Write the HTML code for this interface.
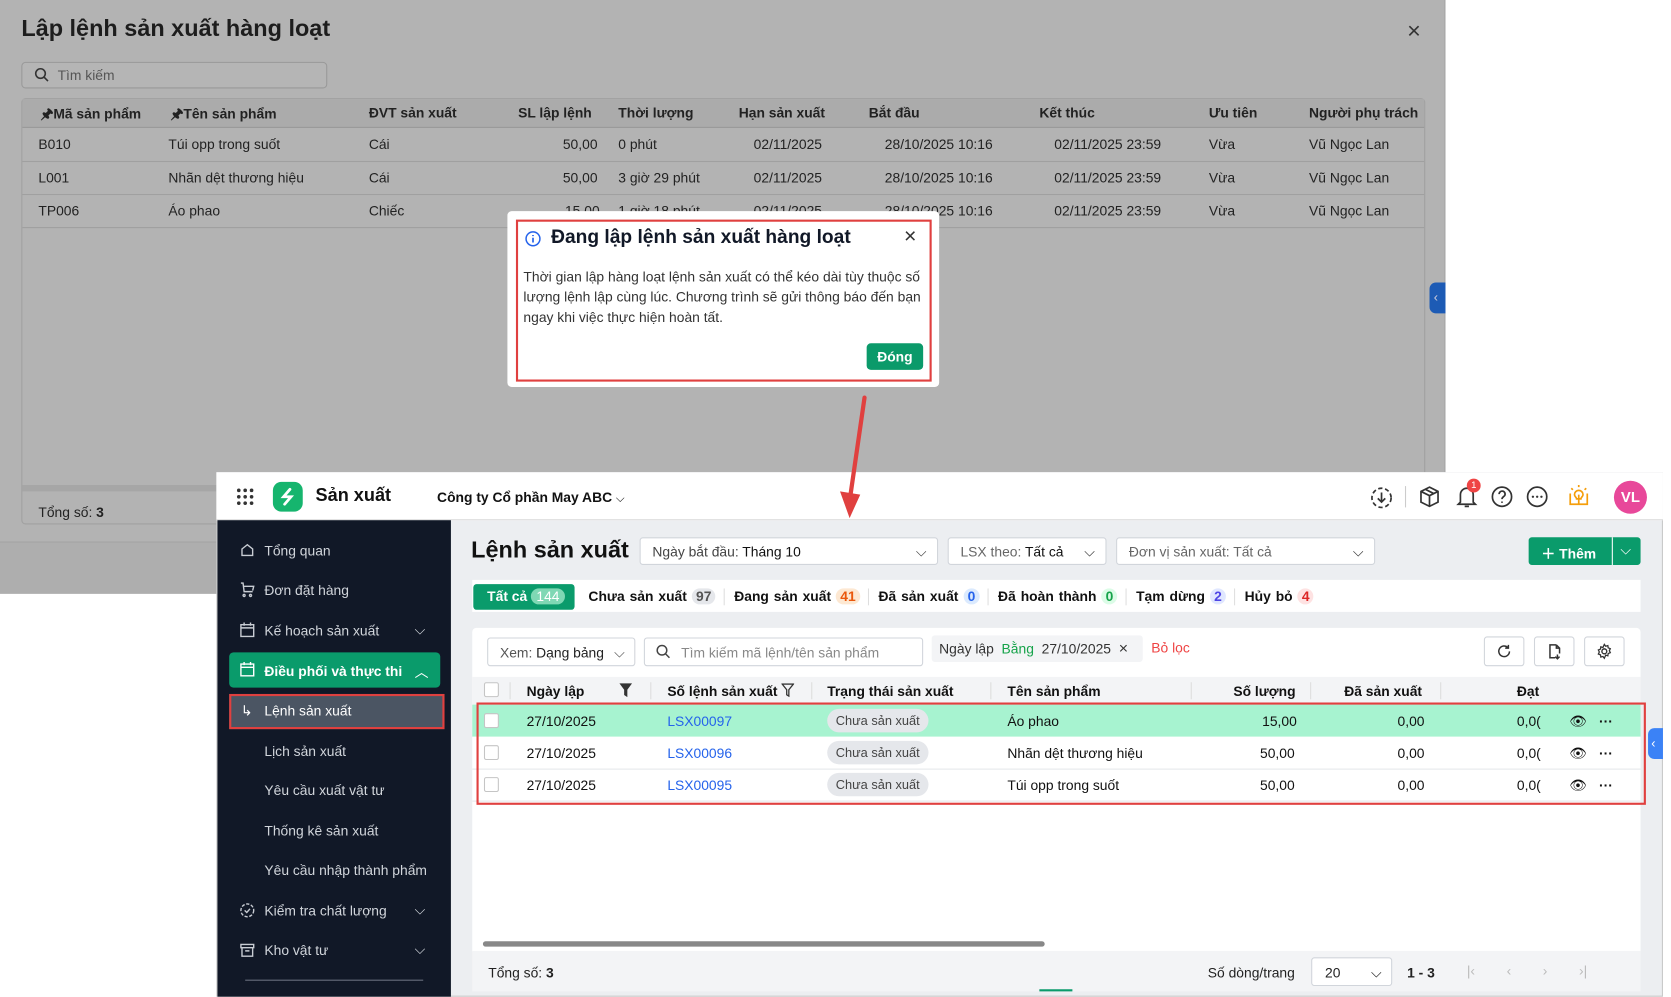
<!DOCTYPE html>
<html><head><meta charset="utf-8">
<style>
*{box-sizing:border-box;margin:0;padding:0}
html,body{width:1671px;height:997px;overflow:hidden;background:#fff;font-family:"Liberation Sans",sans-serif}
#w{position:absolute;left:0;top:0;width:1560px;height:935px;transform:scale(1.066);transform-origin:0 0}
.a{position:absolute;white-space:nowrap}
.t13{font-size:13px}
</style></head><body><div id="w">

<!-- backdrop modal -->
<div class="a" style="left:0;top:0;width:1356px;height:557px;background:#b3b3b3;border-right:1px solid #a5a5a5"></div>
<div class="a" style="left:0;top:508px;width:1356px;height:49px;background:#aeaeae;border-top:1px solid #a3a3a3"></div>
<div class="a" style="left:20px;top:14px;font-size:22px;font-weight:bold;color:#1d1d1d">Lập lệnh sản xuất hàng loạt</div>
<div class="a" style="left:1320px;top:16px;font-size:22px;color:#333">×</div>
<div class="a" style="left:20px;top:58px;width:287px;height:25px;border:1px solid #999;border-radius:4px;background:#b5b5b5"></div>
<svg class="a" style="left:32px;top:63px" width="15" height="15" viewBox="0 0 15 15"><circle cx="6" cy="6" r="4.5" fill="none" stroke="#333" stroke-width="1.5"/><path d="M9.5 9.5L13 13" stroke="#333" stroke-width="1.5"/></svg>
<div class="a t13" style="left:54px;top:63px;color:#555">Tìm kiếm</div>
<div class="a" style="left:20px;top:92px;width:1317px;height:400px;border:1px solid #a0a0a0;border-radius:4px"></div>
<div class="a" style="left:21px;top:93px;width:1315px;height:27px;background:#ababab;border-bottom:1px solid #999"></div>
<div class="a" style="left:21px;top:151px;width:1315px;height:1px;background:#a0a0a0"></div>
<div class="a" style="left:21px;top:182px;width:1315px;height:1px;background:#a0a0a0"></div>
<div class="a" style="left:21px;top:213px;width:1315px;height:1px;background:#a0a0a0"></div>
<div class="a" style="left:21px;top:455px;width:1315px;height:6px;background:#a6a6a6"></div>
<div class="a t13" style="left:0;top:98px;width:1340px;height:16px;font-weight:bold;color:#222">
<span class="a" style="left:38px">🖈Mã sản phẩm</span><span class="a" style="left:160px">🖈Tên sản phẩm</span><span class="a" style="left:346px">ĐVT sản xuất</span><span class="a" style="left:486px">SL lập lệnh</span><span class="a" style="left:580px">Thời lượng</span><span class="a" style="left:693px">Hạn sản xuất</span><span class="a" style="left:815px">Bắt đầu</span><span class="a" style="left:975px">Kết thúc</span><span class="a" style="left:1134px">Ưu tiên</span><span class="a" style="left:1228px">Người phụ trách</span></div>
<div class="a t13" style="left:0;top:128px;width:1340px;color:#222"><span class="a" style="left:36px">B010</span><span class="a" style="left:158px">Túi opp trong suốt</span><span class="a" style="left:346px">Cái</span><span class="a" style="left:528px">50,00</span><span class="a" style="left:580px">0 phút</span><span class="a" style="left:707px">02/11/2025</span><span class="a" style="left:830px">28/10/2025 10:16</span><span class="a" style="left:989px">02/11/2025 23:59</span><span class="a" style="left:1134px">Vừa</span><span class="a" style="left:1228px">Vũ Ngọc Lan</span></div>
<div class="a t13" style="left:0;top:159px;width:1340px;color:#222"><span class="a" style="left:36px">L001</span><span class="a" style="left:158px">Nhãn dệt thương hiệu</span><span class="a" style="left:346px">Cái</span><span class="a" style="left:528px">50,00</span><span class="a" style="left:580px">3 giờ 29 phút</span><span class="a" style="left:707px">02/11/2025</span><span class="a" style="left:830px">28/10/2025 10:16</span><span class="a" style="left:989px">02/11/2025 23:59</span><span class="a" style="left:1134px">Vừa</span><span class="a" style="left:1228px">Vũ Ngọc Lan</span></div>
<div class="a t13" style="left:0;top:190px;width:1340px;color:#222"><span class="a" style="left:36px">TP006</span><span class="a" style="left:158px">Áo phao</span><span class="a" style="left:346px">Chiếc</span><span class="a" style="left:530px">15,00</span><span class="a" style="left:580px">1 giờ 18 phút</span><span class="a" style="left:707px">02/11/2025</span><span class="a" style="left:830px">28/10/2025 10:16</span><span class="a" style="left:989px">02/11/2025 23:59</span><span class="a" style="left:1134px">Vừa</span><span class="a" style="left:1228px">Vũ Ngọc Lan</span></div>
<div class="a t13" style="left:36px;top:473px;color:#222">Tổng số: <b>3</b></div>
<div class="a" style="left:1341px;top:265px;width:15px;height:29px;background:#1d5bb5;border-radius:6px 0 0 6px;color:#ccd;font-size:12px;padding:7px 0 0 4px">‹</div>

<!-- info dialog -->
<div class="a" style="left:476px;top:198px;width:405px;height:165px;background:#fff;border-radius:4px"></div>
<div class="a" style="left:484px;top:206px;width:390px;height:152px;border:2px solid #e0403f"></div>
<svg class="a" style="left:492px;top:216px" width="16" height="16" viewBox="0 0 16 16"><circle cx="8" cy="8" r="6.5" fill="none" stroke="#2563eb" stroke-width="1.4"/><path d="M8 7v4.5M8 4.5v1" stroke="#2563eb" stroke-width="1.6"/></svg>
<div class="a" style="left:517px;top:212px;font-size:18px;font-weight:bold;color:#111827">Đang lập lệnh sản xuất hàng loạt</div>
<div class="a" style="left:848px;top:211px;font-size:20px;color:#333">×</div>
<div class="a t13" style="left:491px;top:250px;line-height:19px;color:#333;white-space:normal;width:380px">Thời gian lập hàng loạt lệnh sản xuất có thể kéo dài tùy thuộc số lượng lệnh lập cùng lúc. Chương trình sẽ gửi thông báo đến bạn ngay khi việc thực hiện hoàn tất.</div>
<div class="a t13" style="left:813px;top:322px;width:53px;height:25px;background:#0b9a6a;border-radius:4px;color:#fff;font-weight:bold;text-align:center;line-height:25px">Đóng</div>

<!-- app window -->
<div class="a" style="left:203px;top:443px;width:1357px;height:492px;background:#eceef1;border:1px solid #c8c8c8"></div>
<div class="a" style="left:203px;top:443px;width:1357px;height:45px;background:#fff;border-bottom:1px solid #ddd"></div>
<svg class="a" style="left:221px;top:457px" width="18" height="18"><g fill="#333"><circle cx="3" cy="3" r="1.7"/><circle cx="9" cy="3" r="1.7"/><circle cx="15" cy="3" r="1.7"/><circle cx="3" cy="9" r="1.7"/><circle cx="9" cy="9" r="1.7"/><circle cx="15" cy="9" r="1.7"/><circle cx="3" cy="15" r="1.7"/><circle cx="9" cy="15" r="1.7"/><circle cx="15" cy="15" r="1.7"/></g></svg>
<div class="a" style="left:256px;top:452px;width:28px;height:28px;border-radius:8px;background:#16b56e"></div>
<svg class="a" style="left:256px;top:452px" width="28" height="28"><path d="M16 7l-6 7h7l-6 7" fill="none" stroke="#fff" stroke-width="2.6" stroke-linecap="round"/></svg>
<div class="a" style="left:296px;top:455px;font-size:17px;font-weight:bold;color:#111">Sản xuất</div>
<div class="a t13" style="left:410px;top:459px;font-weight:bold;color:#111">Công ty Cổ phần May ABC <span style="font-weight:normal;font-size:11px">⌵</span></div>
<svg class="a" style="left:1284px;top:455px" width="24" height="24" viewBox="0 0 24 24"><circle cx="12" cy="12" r="9" fill="none" stroke="#333" stroke-width="1.6" stroke-dasharray="4 2.5"/><path d="M12 7v9M8.5 12.5L12 16l3.5-3.5" fill="none" stroke="#333" stroke-width="1.6"/></svg>
<div class="a" style="left:1318px;top:456px;width:1px;height:20px;background:#ccc"></div>
<svg class="a" style="left:1330px;top:455px" width="22" height="22" viewBox="0 0 22 22"><path d="M11 2l8 4v10l-8 4-8-4V6zM3 6l8 4 8-4M11 10v10M7 4l8 4" fill="none" stroke="#333" stroke-width="1.6"/></svg>
<svg class="a" style="left:1365px;top:454px" width="22" height="24" viewBox="0 0 22 24"><path d="M5 17V10a6 6 0 0112 0v7l2 2H3zM9 21h4" fill="none" stroke="#333" stroke-width="1.6"/></svg>
<div class="a" style="left:1376px;top:449px;width:13px;height:13px;border-radius:50%;background:#ef4444;color:#fff;font-size:9px;text-align:center;line-height:13px">1</div>
<svg class="a" style="left:1398px;top:455px" width="22" height="22" viewBox="0 0 22 22"><circle cx="11" cy="11" r="9" fill="none" stroke="#333" stroke-width="1.6"/><path d="M8.3 8.5a2.8 2.8 0 115 1.7c-1 .9-2.3 1.3-2.3 3M11 15.5v1.2" fill="none" stroke="#333" stroke-width="1.6"/></svg>
<svg class="a" style="left:1431px;top:455px" width="22" height="22" viewBox="0 0 22 22"><circle cx="11" cy="11" r="9" fill="none" stroke="#333" stroke-width="1.6"/><g fill="#333"><circle cx="7" cy="11" r="1.1"/><circle cx="11" cy="11" r="1.1"/><circle cx="15" cy="11" r="1.1"/></g></svg>
<svg class="a" style="left:1469px;top:453px" width="24" height="24" viewBox="0 0 24 24"><path d="M4 10v10h16V10M12 20V11M8 11a4 4 0 118 0c0 2-2 2.5-2 4h-4c0-1.5-2-2-2-4M12 2v2M5 5l1.5 1.5M19 5l-1.5 1.5" fill="none" stroke="#f59e0b" stroke-width="1.6"/></svg>
<div class="a" style="left:1514px;top:451px;width:31px;height:31px;border-radius:50%;background:#e8489a;color:#fff;font-weight:bold;font-size:14px;text-align:center;line-height:31px">VL</div>

<!-- sidebar -->
<div class="a" style="left:204px;top:488px;width:219px;height:447px;background:#111827"></div>
<div class="a t13" style="left:0;top:0;color:#d1d5db">
<span class="a" style="left:248px;top:509px">Tổng quan</span>
<span class="a" style="left:248px;top:546px">Đơn đặt hàng</span>
<span class="a" style="left:248px;top:584px">Kế hoạch sản xuất</span>
<span class="a" style="left:248px;top:697px">Lịch sản xuất</span>
<span class="a" style="left:248px;top:734px">Yêu cầu xuất vật tư</span>
<span class="a" style="left:248px;top:772px">Thống kê sản xuất</span>
<span class="a" style="left:248px;top:809px">Yêu cầu nhập thành phẩm</span>
<span class="a" style="left:248px;top:847px">Kiểm tra chất lượng</span>
<span class="a" style="left:248px;top:884px">Kho vật tư</span>
<span class="a" style="left:389px;top:583px">⌵</span><span class="a" style="left:389px;top:846px">⌵</span><span class="a" style="left:389px;top:883px">⌵</span>
</div>
<svg class="a" style="left:224px;top:508px" width="16" height="16" viewBox="0 0 16 16"><path d="M3 7l5-4 5 4v6H3z" fill="none" stroke="#c9cdd4" stroke-width="1.3"/></svg>
<svg class="a" style="left:224px;top:545px" width="16" height="16" viewBox="0 0 16 16"><path d="M2 2h2l1 8h8M5 5h9l-1 4M6 13.5a1 1 0 100 .1M12 13.5a1 1 0 100 .1" fill="none" stroke="#c9cdd4" stroke-width="1.3"/></svg>
<svg class="a" style="left:224px;top:583px" width="16" height="16" viewBox="0 0 16 16"><path d="M2 3h12v11H2zM2 6h12M5 1v3M11 1v3" fill="none" stroke="#c9cdd4" stroke-width="1.3"/></svg>
<svg class="a" style="left:224px;top:846px" width="16" height="16" viewBox="0 0 16 16"><circle cx="8" cy="8" r="6" fill="none" stroke="#c9cdd4" stroke-width="1.3" stroke-dasharray="3 1.5"/><path d="M5.5 8l2 2 3-3.5" fill="none" stroke="#c9cdd4" stroke-width="1.3"/></svg>
<svg class="a" style="left:224px;top:883px" width="16" height="16" viewBox="0 0 16 16"><path d="M2 3h12v3H2zM3 6v8h10V6M6 9h4" fill="none" stroke="#c9cdd4" stroke-width="1.3"/></svg>
<div class="a" style="left:215px;top:612px;width:198px;height:33px;background:#0a9b6b;border-radius:4px"></div>
<svg class="a" style="left:224px;top:620px" width="16" height="16" viewBox="0 0 16 16"><path d="M2 3h12v11H2zM2 6h12M5 1v3M11 1v3" fill="none" stroke="#fff" stroke-width="1.3"/></svg>
<div class="a t13" style="left:248px;top:622px;color:#fff;font-weight:bold">Điều phối và thực thi</div>
<div class="a t13" style="left:389px;top:620px;color:#fff">︿</div>
<div class="a" style="left:215px;top:651px;width:202px;height:33px;background:#4b5563;border:2px solid #e0403f"></div>
<div class="a t13" style="left:226px;top:659px;color:#fff">↳</div>
<div class="a t13" style="left:248px;top:659px;color:#fff">Lệnh sản xuất</div>
<div class="a" style="left:230px;top:919px;width:167px;height:1px;background:#6b7280"></div>

<!-- main -->
<div class="a" style="left:442px;top:503px;font-size:22px;font-weight:bold;color:#111">Lệnh sản xuất</div>
<div class="a t13" style="left:600px;top:504px;width:280px;height:26px;background:#fff;border:1px solid #d1d5db;border-radius:3px;padding:5px 11px;color:#444">Ngày bắt đầu: <span style="color:#111">Tháng 10</span><span style="position:absolute;right:10px">⌵</span></div>
<div class="a t13" style="left:889px;top:504px;width:149px;height:26px;background:#fff;border:1px solid #d1d5db;border-radius:3px;padding:5px 11px;color:#666">LSX theo: <span style="color:#111">Tất cả</span><span style="position:absolute;right:10px;color:#333">⌵</span></div>
<div class="a t13" style="left:1047px;top:504px;width:243px;height:26px;background:#fff;border:1px solid #d1d5db;border-radius:3px;padding:5px 11px;color:#666">Đơn vị sản xuất: Tất cả<span style="position:absolute;right:10px;color:#333">⌵</span></div>
<div class="a t13" style="left:1434px;top:504px;width:105px;height:26px;background:#0a9b6b;border-radius:3px;color:#fff;font-weight:bold;padding:5px 0 0 12px">＋ Thêm</div>
<div class="a" style="left:1512px;top:504px;width:1px;height:26px;background:#fff"></div>
<div class="a t13" style="left:1520px;top:508px;color:#fff">⌵</div>

<div class="a" style="left:443px;top:544px;width:1096px;height:30px;background:#fff"></div>
<div class="a t13" style="left:444px;top:548px;width:95px;height:24px;background:#0a9b6b;border-radius:3px;color:#fff;font-weight:bold;padding:4px 0 0 13px">Tất cả <span style="background:#7fd8b4;color:#fff;border-radius:9px;padding:0 5px;font-weight:normal">144</span></div>
<div class="a t13" style="left:552px;top:552px;font-weight:bold;color:#111;word-spacing:1px">Chưa sản xuất <span style="background:#e5e7eb;color:#555;border-radius:8px;padding:0 4px">97</span><span style="color:#ddd"> │ </span> Đang sản xuất <span style="background:#fde8d2;color:#ea580c;border-radius:8px;padding:0 4px">41</span><span style="color:#ddd"> │ </span> Đã sản xuất <span style="background:#dbeafe;color:#2563eb;border-radius:8px;padding:0 4px">0</span><span style="color:#ddd"> │ </span> Đã hoàn thành <span style="background:#dcfce7;color:#16a34a;border-radius:8px;padding:0 4px">0</span><span style="color:#ddd"> │ </span> Tạm dừng <span style="background:#e0e7ff;color:#4f46e5;border-radius:8px;padding:0 4px">2</span><span style="color:#ddd"> │ </span> Hủy bỏ <span style="background:#fee2e2;color:#dc2626;border-radius:8px;padding:0 4px">4</span></div>

<div class="a" style="left:443px;top:589px;width:1096px;height:307px;background:#fff;border-radius:4px"></div>
<div class="a t13" style="left:457px;top:598px;width:139px;height:27px;border:1px solid #d1d5db;border-radius:3px;padding:6px 11px;color:#555">Xem: <span style="color:#222">Dạng bảng</span><span style="position:absolute;right:9px">⌵</span></div>
<div class="a t13" style="left:604px;top:598px;width:262px;height:27px;border:1px solid #d1d5db;border-radius:3px;padding:6px 0 0 34px;color:#888">Tìm kiếm mã lệnh/tên sản phẩm</div>
<svg class="a" style="left:615px;top:604px" width="15" height="15" viewBox="0 0 15 15"><circle cx="6" cy="6" r="4.5" fill="none" stroke="#444" stroke-width="1.4"/><path d="M9.5 9.5L13 13" stroke="#444" stroke-width="1.4"/></svg>
<div class="a t13" style="left:874px;top:596px;width:198px;height:25px;background:#f3f4f6;border-radius:3px;padding:4px 7px;color:#333">Ngày lập &nbsp;<span style="color:#16a34a">Bằng</span>&nbsp; 27/10/2025 &nbsp;<span style="font-size:15px">×</span></div>
<div class="a t13" style="left:1080px;top:600px;color:#ef4444">Bỏ lọc</div>
<div class="a" style="left:1392px;top:597px;width:38px;height:28px;border:1px solid #d1d5db;border-radius:3px"></div>
<div class="a" style="left:1439px;top:597px;width:38px;height:28px;border:1px solid #d1d5db;border-radius:3px"></div>
<div class="a" style="left:1486px;top:597px;width:38px;height:28px;border:1px solid #d1d5db;border-radius:3px"></div>
<svg class="a" style="left:1403px;top:603px" width="16" height="16" viewBox="0 0 16 16"><path d="M13 8a5 5 0 11-1.5-3.6M12 2v3h-3" fill="none" stroke="#333" stroke-width="1.4"/></svg>
<svg class="a" style="left:1450px;top:603px" width="16" height="16" viewBox="0 0 16 16"><path d="M10 2H4v12h5M10 2l3 3v5M10 2v3h3M11 11v4M9 13l2 2 2-2" fill="none" stroke="#333" stroke-width="1.4"/></svg>
<svg class="a" style="left:1497px;top:603px" width="16" height="16" viewBox="0 0 16 16"><circle cx="8" cy="8" r="2.3" fill="none" stroke="#333" stroke-width="1.3"/><path d="M8 1.5l1.3 1.7 2-.6.3 2.1 2 .8-.9 1.9.9 1.9-2 .8-.3 2.1-2-.6L8 14.5l-1.3-1.7-2 .6-.3-2.1-2-.8.9-1.9-.9-1.9 2-.8.3-2.1 2 .6z" fill="none" stroke="#333" stroke-width="1.2"/></svg>

<div class="a" style="left:443px;top:635px;width:1096px;height:26px;background:#f3f4f6"></div>
<div class="a" style="left:454px;top:640px;width:14px;height:14px;border:1px solid #c5c5c5;background:#fff;border-radius:2px"></div>
<div class="a t13" style="left:0;top:641px;font-weight:bold;color:#111"><span class="a" style="left:494px">Ngày lập</span><span class="a" style="left:626px">Số lệnh sản xuất</span><span class="a" style="left:776px">Trạng thái sản xuất</span><span class="a" style="left:945px">Tên sản phẩm</span><span class="a" style="left:1157px">Số lượng</span><span class="a" style="left:1261px">Đã sản xuất</span><span class="a" style="left:1423px">Đạt</span></div>
<svg class="a" style="left:581px;top:641px" width="12" height="13"><path d="M0 0h12L7.5 6v7L4.5 11V6z" fill="#333"/></svg>
<svg class="a" style="left:733px;top:641px" width="12" height="13"><path d="M.7.7h10.6L7 6v6L5 10.8V6z" fill="none" stroke="#333" stroke-width="1.2"/></svg>
<div class="a" style="left:478px;top:640px;width:1px;height:16px;background:#ddd"></div>
<div class="a" style="left:610px;top:640px;width:1px;height:16px;background:#ddd"></div>
<div class="a" style="left:761px;top:640px;width:1px;height:16px;background:#ddd"></div>
<div class="a" style="left:929px;top:640px;width:1px;height:16px;background:#ddd"></div>
<div class="a" style="left:1117px;top:640px;width:1px;height:16px;background:#ddd"></div>
<div class="a" style="left:1229px;top:640px;width:1px;height:16px;background:#ddd"></div>
<div class="a" style="left:1351px;top:640px;width:1px;height:16px;background:#ddd"></div>

<div class="a" style="left:443px;top:661px;width:1096px;height:30px;background:#a7f3d0"></div>
<div class="a" style="left:443px;top:721px;width:1096px;height:1px;background:#e5e7eb"></div>
<div class="a" style="left:443px;top:751px;width:1096px;height:1px;background:#e5e7eb"></div>
<div class="a" style="left:454px;top:669px;width:14px;height:14px;border:1px solid #c5c5c5;background:#fff;border-radius:2px"></div>
<div class="a" style="left:454px;top:699px;width:14px;height:14px;border:1px solid #c5c5c5;background:#fff;border-radius:2px"></div>
<div class="a" style="left:454px;top:729px;width:14px;height:14px;border:1px solid #c5c5c5;background:#fff;border-radius:2px"></div>
<div class="a t13" style="left:0;top:669px;color:#111"><span class="a" style="left:494px">27/10/2025</span><span class="a" style="left:626px;color:#2563eb">LSX00097</span><span class="a" style="left:776px;top:-4px;background:#e5e7eb;border-radius:11px;padding:4px 8px;font-size:12px;color:#444">Chưa sản xuất</span><span class="a" style="left:945px">Áo phao</span><span class="a" style="left:1184px">15,00</span><span class="a" style="left:1311px">0,00</span><span class="a" style="left:1423px">0,0(</span><span class="a" style="left:1472px">👁</span><span class="a" style="left:1500px;font-weight:bold">···</span></div>
<div class="a t13" style="left:0;top:699px;color:#111"><span class="a" style="left:494px">27/10/2025</span><span class="a" style="left:626px;color:#2563eb">LSX00096</span><span class="a" style="left:776px;top:-4px;background:#e5e7eb;border-radius:11px;padding:4px 8px;font-size:12px;color:#444">Chưa sản xuất</span><span class="a" style="left:945px">Nhãn dệt thương hiệu</span><span class="a" style="left:1182px">50,00</span><span class="a" style="left:1311px">0,00</span><span class="a" style="left:1423px">0,0(</span><span class="a" style="left:1472px">👁</span><span class="a" style="left:1500px;font-weight:bold">···</span></div>
<div class="a t13" style="left:0;top:729px;color:#111"><span class="a" style="left:494px">27/10/2025</span><span class="a" style="left:626px;color:#2563eb">LSX00095</span><span class="a" style="left:776px;top:-4px;background:#e5e7eb;border-radius:11px;padding:4px 8px;font-size:12px;color:#444">Chưa sản xuất</span><span class="a" style="left:945px">Túi opp trong suốt</span><span class="a" style="left:1182px">50,00</span><span class="a" style="left:1311px">0,00</span><span class="a" style="left:1423px">0,0(</span><span class="a" style="left:1472px">👁</span><span class="a" style="left:1500px;font-weight:bold">···</span></div>
<div class="a" style="left:447px;top:659px;width:1097px;height:96px;border:2px solid #e0403f"></div>
<div class="a" style="left:1546px;top:683px;width:14px;height:29px;background:#3b82f6;border-radius:6px 0 0 6px;color:#fff;font-size:12px;padding:7px 0 0 3px">‹</div>

<div class="a" style="left:453px;top:883px;width:527px;height:5px;background:#888;border-radius:3px"></div>
<div class="a" style="left:443px;top:892px;width:1096px;height:38px;background:#f3f4f6"></div>
<div class="a t13" style="left:458px;top:905px;color:#222">Tổng số: <b>3</b></div>
<div class="a t13" style="left:1133px;top:905px;color:#222">Số dòng/trang</div>
<div class="a t13" style="left:1230px;top:898px;width:76px;height:27px;background:#fff;border:1px solid #d1d5db;border-radius:3px;padding:6px 12px;color:#222">20<span style="position:absolute;right:9px">⌵</span></div>
<div class="a t13" style="left:1320px;top:905px;font-weight:bold;color:#222">1 - 3</div>
<div class="a t13" style="left:1376px;top:903px;color:#bbb;word-spacing:26px">|‹ ‹ › ›|</div>
<div class="a" style="left:975px;top:928px;width:31px;height:2px;background:#0a9b6b"></div>

<!-- arrow -->
<svg class="a" style="left:780px;top:365px" width="40" height="130"><path d="M31 8L17 105" stroke="#e0403f" stroke-width="4" stroke-linecap="round"/><path d="M8 96l9 25 10-22z" fill="#e0403f"/></svg>
</div></body></html>
